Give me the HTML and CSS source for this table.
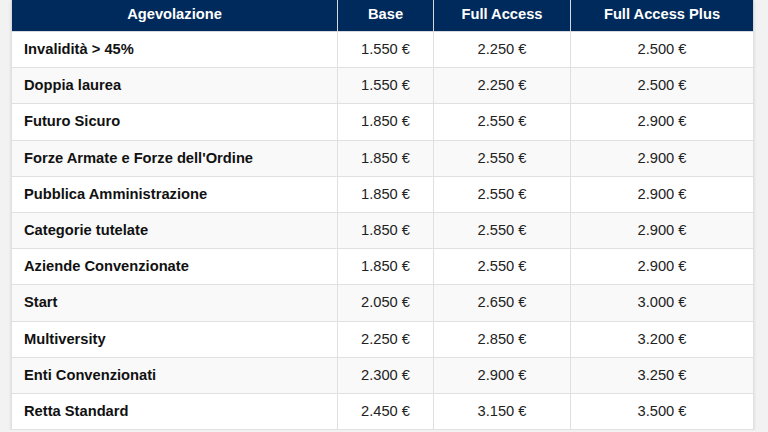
FILE: index.html
```html
<!DOCTYPE html>
<html lang="it">
<head>
<meta charset="utf-8">
<title>Agevolazioni</title>
<link rel="stylesheet" href="styles.css">
</head>
<body>
<div class="page">
<table class="fees">
  <thead>
    <tr>
      <th class="c-name">Agevolazione</th>
      <th class="c-base">Base</th>
      <th class="c-full">Full Access</th>
      <th class="c-plus">Full Access Plus</th>
    </tr>
  </thead>
  <tbody>
    <tr><td class="name">Invalidità &gt; 45%</td><td>1.550 €</td><td>2.250 €</td><td>2.500 €</td></tr>
    <tr><td class="name">Doppia laurea</td><td>1.550 €</td><td>2.250 €</td><td>2.500 €</td></tr>
    <tr><td class="name">Futuro Sicuro</td><td>1.850 €</td><td>2.550 €</td><td>2.900 €</td></tr>
    <tr><td class="name">Forze Armate e Forze dell'Ordine</td><td>1.850 €</td><td>2.550 €</td><td>2.900 €</td></tr>
    <tr><td class="name">Pubblica Amministrazione</td><td>1.850 €</td><td>2.550 €</td><td>2.900 €</td></tr>
    <tr><td class="name">Categorie tutelate</td><td>1.850 €</td><td>2.550 €</td><td>2.900 €</td></tr>
    <tr><td class="name">Aziende Convenzionate</td><td>1.850 €</td><td>2.550 €</td><td>2.900 €</td></tr>
    <tr><td class="name">Start</td><td>2.050 €</td><td>2.650 €</td><td>3.000 €</td></tr>
    <tr><td class="name">Multiversity</td><td>2.250 €</td><td>2.850 €</td><td>3.200 €</td></tr>
    <tr><td class="name">Enti Convenzionati</td><td>2.300 €</td><td>2.900 €</td><td>3.250 €</td></tr>
    <tr><td class="name">Retta Standard</td><td>2.450 €</td><td>3.150 €</td><td>3.500 €</td></tr>
  </tbody>
</table>
</div>
</body>
</html>
```
FILE: styles.css
```css
html, body {
  margin: 0;
  padding: 0;
  background: #f2f2f2;
}
.page {
  padding: 0 0 0 11px;
  font-family: "Liberation Sans", Arial, sans-serif;
}
.fees {
  width: 742px;
  border-collapse: collapse;
  table-layout: fixed;
  background: #ffffff;
  box-shadow: 0 1px 3px rgba(0, 0, 0, 0.12);
  font-size: 14.7px;
  line-height: 17px;
  color: #222;
}
.fees th {
  background: #002a5c;
  color: #ffffff;
  font-weight: bold;
  text-align: center;
  padding: 6px 12px 8px;
  border: 1px solid #d6d9de;
  border-top: none;
}
.c-name { width: 301px; }
.c-base { width: 71px; }
.c-full { width: 112px; }
.c-plus { width: 158px; }
.fees td {
  padding: 9.1px 12px;
  border: 1px solid #e0e0e0;
  text-align: center;
  color: #222;
}
.fees td.name {
  text-align: left;
  font-weight: bold;
  color: #111;
}
.fees tbody tr:nth-child(even) td {
  background: #f9f9f9;
}
```
